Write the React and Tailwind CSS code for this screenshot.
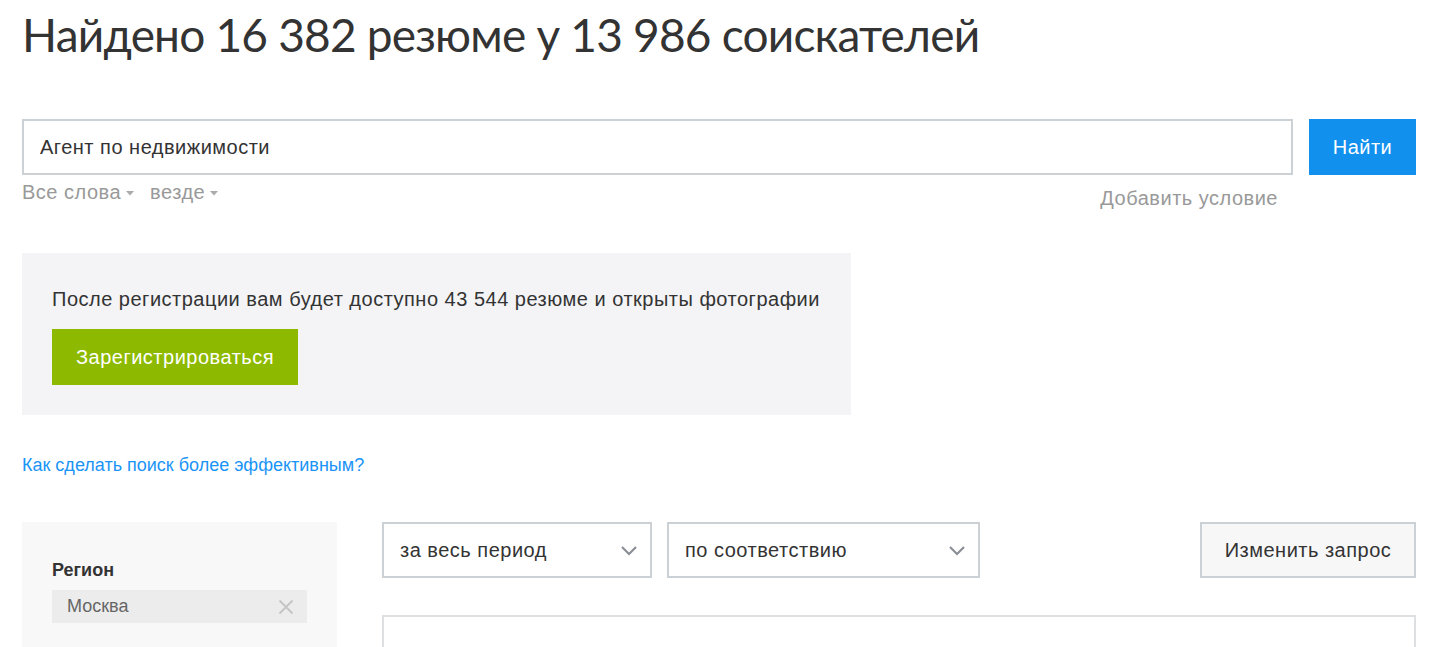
import { useState } from 'react'

function Caret() {
  return (
    <svg width="8" height="5" viewBox="0 0 8 5" className="ml-[5px] mt-[2px]">
      <path d="M0 0h8L4 4.5z" fill="#aaa" />
    </svg>
  )
}

function Chevron() {
  return (
    <svg width="18" height="11" viewBox="0 0 18 11">
      <path d="M2 2l7 7 7-7" fill="none" stroke="#8a8f96" strokeWidth="2.2" />
    </svg>
  )
}

function Select({ label, width }) {
  return (
    <div className={`flex items-center justify-between h-[56px] border-2 border-[#ccd1d6] bg-white pl-[16px] pr-[12px] ${width}`}>
      <span className="text-[20px] text-[#333]">{label}</span>
      <Chevron />
    </div>
  )
}

export default function App() {
  const [query, setQuery] = useState('Агент по недвижимости')

  return (
    <div className="min-h-screen bg-white font-['Liberation_Sans',Arial,sans-serif] tracking-[0.5px] text-[#333]">
      <div className="ml-[22px] w-[1394px]">
        <h1 className="pt-[5px] text-[46px] leading-[60px] font-normal tracking-[-0.8px] text-[#333] font-['Lato','Roboto',sans-serif]">
          Найдено 16 382 резюме у 13 986 соискателей
        </h1>

        {/* Search */}
        <div className="flex mt-[54px]">
          <input
            value={query}
            onChange={e => setQuery(e.target.value)}
            className="flex-1 h-[56px] border-2 border-[#ccd1d6] px-[16px] text-[20px] tracking-[0.5px] text-[#333] outline-none"
          />
          <button className="ml-[16px] w-[107px] h-[56px] bg-[#1190ee] text-white text-[20px]">Найти</button>
        </div>
        <div className="flex justify-between items-start w-[1271px]">
          <div className="flex items-center gap-[16px] mt-[5px] text-[20px] leading-[24px] text-[#999]">
            <span className="flex items-center">Все слова<Caret /></span>
            <span className="flex items-center">везде<Caret /></span>
          </div>
          <span className="mt-[11px] mr-[15px] text-[20px] leading-[24px] text-[#999]">Добавить условие</span>
        </div>

        {/* Registration */}
        <div className="mt-[43px] w-[829px] h-[162px] bg-[#f4f4f6] px-[30px] pt-[34px]">
          <p className="text-[20px] leading-[24px] text-[#333]">
            После регистрации вам будет доступно 43 544 резюме и открыты фотографии
          </p>
          <button className="mt-[18px] w-[246px] h-[56px] bg-[#8dba00] text-white text-[20px]">
            Зарегистрироваться
          </button>
        </div>

        <a href="#" className="block mt-[39px] text-[18px] leading-[22px] tracking-normal text-[#1a94f6]">
          Как сделать поиск более эффективным?
        </a>

        {/* Lower */}
        <div className="flex mt-[46px]">
          <aside className="w-[315px] h-[140px] bg-[#f8f8f8] px-[30px] pt-[37px] tracking-normal">
            <div className="text-[18px] leading-[22px] font-bold text-[#333]">Регион</div>
            <div className="mt-[9px] flex items-center justify-between h-[33px] bg-[#ececec] pl-[15px] pr-[13px]">
              <span className="text-[18px] text-[#666]">Москва</span>
              <svg width="16" height="16" viewBox="0 0 16 16">
                <path d="M1.5 1.5l13 13M14.5 1.5l-13 13" stroke="#c4c4c4" strokeWidth="1.8" />
              </svg>
            </div>
          </aside>
          <div className="flex-1 ml-[45px]">
            <div className="flex">
              <Select label="за весь период" width="w-[270px]" />
              <div className="ml-[15px]"><Select label="по соответствию" width="w-[313px]" /></div>
              <button className="ml-auto w-[216px] h-[56px] border-2 border-[#ccd1d6] bg-[#f7f7f7] text-[20px] text-[#333]">
                Изменить запрос
              </button>
            </div>
            <div className="mt-[37px] h-[120px] border-2 border-[#dedfe0]" />
          </div>
        </div>
      </div>
    </div>
  )
}
